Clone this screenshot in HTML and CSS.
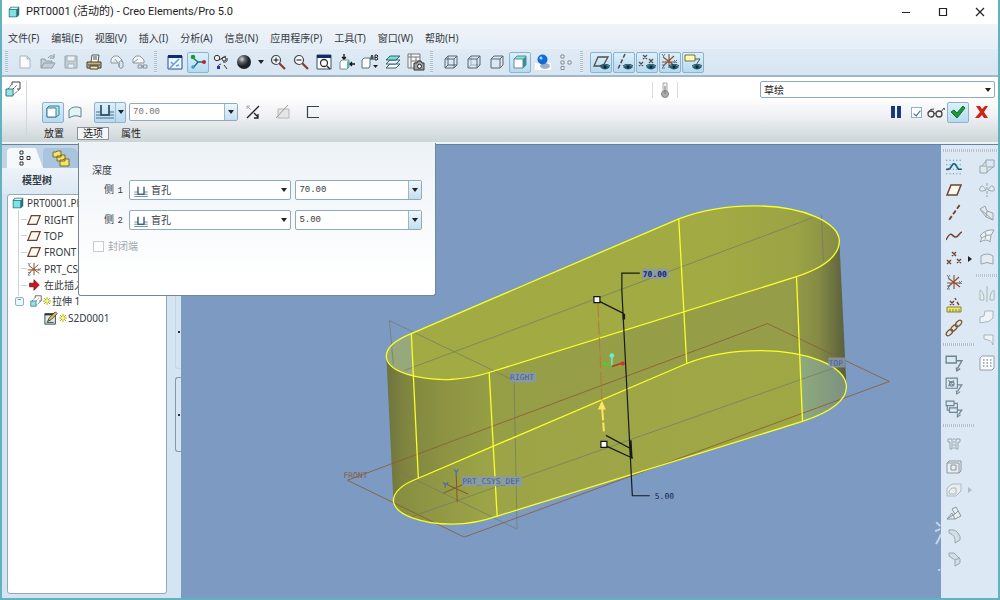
FILE: index.html
```html
<!DOCTYPE html>
<html lang="zh-CN">
<head>
<meta charset="utf-8">
<title>PRT0001 (活动的) - Creo Elements/Pro 5.0</title>
<link rel="stylesheet" href="styles.css">
</head>
<body>
<svg class="defs" aria-hidden="true">
  <symbol id="i-part" viewBox="0 0 16 16"><path d="M1 4 4 1H15V12L12 15H1Z" fill="#2d6f78"/><path d="M2 5H11V14H2Z" fill="#7fe3e3"/><path d="M2.500 4 4.500 2H14L12 4Z" fill="#d6f8f6"/></symbol>
  <symbol id="i-extrude" viewBox="0 0 16 16"><path d="M3 8 7 3M8 8 12 4M8 14 15 8" fill="none" stroke="#555" stroke-dasharray="2 1"/><path d="M7 4V1H15V8H12" fill="none" stroke="#444"/><path d="M1 8H8V15H1Z" fill="#8fe6e4" stroke="#357a86"/></symbol>
  <symbol id="i-plane" viewBox="0 0 16 16"><path d="M5 3H15L11 13H1Z" fill="#fff8ee" stroke="#6b4434" stroke-width="1.500"/></symbol>
  <symbol id="i-axis" viewBox="0 0 16 16"><path d="M13 1 3 15" stroke="#734130" stroke-width="1.600" stroke-dasharray="4 2"/></symbol>
  <symbol id="i-points" viewBox="0 0 16 16"><path d="M6 1l4 4m0-4L6 5M1 9l4 4m0-4-4 4M11 8l4 4m0-4-4 4" stroke="#6b4434" stroke-width="1.400"/></symbol>
  <symbol id="i-csys" viewBox="0 0 16 16"><path d="M8 1 8 15M2 4 14 13M2 13 13 3M1 9H15" stroke="#8a4b2c" stroke-width="1.100"/><path d="M1 1l1.500 2L4 1M2.500 3v2M1 12h3l-3 3h3M13 7l3 3m0-3-3 3" fill="none" stroke="#667c96"/></symbol>
  <symbol id="i-eye" viewBox="0 0 10 6"><path d="M0 3Q5-2 10 3Q5 8 0 3Z" fill="#256174"/><circle cx="5" cy="3" r="1.500" fill="#0b2533"/><path d="M0 2Q5-2 10 2" fill="none" stroke="#203e50"/></symbol>
  <symbol id="i-caret" viewBox="0 0 6 4"><path d="M0 0H6L3 4Z" fill="#222"/></symbol>
  <symbol id="i-depth" viewBox="0 0 18 16"><path d="M0 11H18M0 14H18M0 8H5M13 8H18" stroke="#4c7080"/><path d="M5 1V11H13V1" fill="none" stroke="#22455c" stroke-width="1.600"/></symbol>
  <symbol id="i-star" viewBox="0 0 8 8"><path d="M1 1 7 7M7 1 1 7M4 0V8M0 4H8" stroke="#abb116"/><circle cx="4" cy="4" r="1.500" fill="#fbff62"/></symbol>
  <symbol id="i-tag" viewBox="0 0 16 16"><path d="M1 2H10V8H1ZM10 6H15L11 13M10 12l.5 3 3-2" fill="none" stroke="#6f8492" stroke-width="1.200"/></symbol>
  <symbol id="i-mag" viewBox="0 0 16 16"><path d="M9 9 15 15" stroke="#8a3b2c" stroke-width="2.200"/><circle cx="6" cy="6" r="4.500" fill="#f6fbff" stroke="#444" stroke-width="1.200"/></symbol>
</svg>

<div class="window">
  <header class="title">
    <svg class="s12"><use href="#i-part"/></svg>
    <h1>PRT0001 (活动的) - Creo Elements/Pro 5.0</h1>
    <button aria-label="最小化"><svg viewBox="0 0 10 10"><path d="M1 5.500H9" stroke="#222"/></svg></button>
    <button aria-label="最大化"><svg viewBox="0 0 10 10"><path d="M1.500 1.500H8.500V8.500H1.500Z" fill="none" stroke="#222" stroke-width="1.200"/></svg></button>
    <button aria-label="关闭"><svg viewBox="0 0 10 10"><path d="M1 1 9 9M9 1 1 9" stroke="#222" stroke-width="1.200"/></svg></button>
  </header>

  <nav class="menu">
    <a href="#">文件(F)</a><a href="#">编辑(E)</a><a href="#">视图(V)</a><a href="#">插入(I)</a><a href="#">分析(A)</a><a href="#">信息(N)</a><a href="#">应用程序(P)</a><a href="#">工具(T)</a><a href="#">窗口(W)</a><a href="#">帮助(H)</a>
  </nav>

  <div class="toolbar">
    <i class="grip"></i>
    <button aria-label="新建"><svg class="s16" viewBox="0 0 16 16"><path d="M3 2H10L13 5V14H3ZM10 2V5H13" fill="#f8fafb" stroke="#a9b4bd"/></svg></button>
    <button aria-label="打开"><svg class="s16" viewBox="0 0 16 16"><path d="M1 14V5H5L6 7H12V9M1 14 4 9H15L12 14Z" fill="#c5ced4" stroke="#929da5"/><path d="M8 4Q11 0 14 3M14 0V4H10" fill="none" stroke="#87939c"/></svg></button>
    <button aria-label="保存"><svg class="s16" viewBox="0 0 16 16"><path d="M2 2H14V14H2Z" fill="#c5ced5" stroke="#9aa6af"/><path d="M4 2H12V7H4ZM5 10H11V14H5Z" fill="#eef2f5" stroke="#a8b3bb"/></svg></button>
    <button aria-label="打印"><svg class="s16" viewBox="0 0 16 16"><path d="M5 8 6 1H13L12 8" fill="#fff" stroke="#555"/><path d="M1 8H15V14H1Z" fill="#c8b47a" stroke="#443c2e"/><path d="M7 3H11M7 5H11M2 11H14" stroke="#444"/><path d="M4 12H12V15H4Z" fill="#f3e9a1" stroke="#443c2e"/></svg></button>
    <button aria-label="发送"><svg class="s16" viewBox="0 0 16 16"><path d="M2 9V5L5 2H9L13 6V8M2 9H9L6 5" fill="#f3f6f8" stroke="#8c979f"/><path d="M10 13V8Q12 5 14 8V13Q12 16 10 13V9" fill="none" stroke="#88939b"/></svg></button>
    <button aria-label="链接"><svg class="s16" viewBox="0 0 16 16"><path d="M1 9V5L4 2H8L12 6V9H1L6 5" fill="#f3f6f8" stroke="#8c979f"/><path d="M6 11H10V14H6ZM11 11H15V14H11ZM9 12.500H12" fill="none" stroke="#88939b"/></svg></button>
    <i class="grip sep"></i>
    <button aria-label="重画"><svg class="s16" viewBox="0 0 16 16"><path d="M1 2H15V15H1Z" fill="#e8f6ff" stroke="#274f9c"/><path d="M1 1H15V4H1Z" fill="#102c74"/><path d="M3 14 12 5M4 8l2 2M9 12l3-1" stroke="#6b9cc4" stroke-width="1.500"/></svg></button>
    <button class="on" aria-label="旋转中心"><svg class="s16" viewBox="0 0 16 16"><path d="M2 3 8 8H14M8 8 3 14" fill="none" stroke="#256a80" stroke-width="1.300"/><circle cx="3" cy="3" r="2.300" fill="#1e9a3c"/><circle cx="14" cy="8" r="2" fill="#c0212c"/><circle cx="3" cy="13" r="1.700" fill="#39a1bd"/></svg></button>
    <button aria-label="定向模式"><svg class="s16" viewBox="0 0 16 16"><circle cx="4" cy="4" r="2.700" fill="#eee" stroke="#333"/><circle cx="11" cy="5" r="2" fill="#eee" stroke="#333"/><path d="M6 6 13 2M10 8Q15 9 14 4M8 10Q4 11 5 15M11 11l3 4" fill="none" stroke="#333"/><path d="M4 12h3v3H4Z" fill="#203a90"/></svg></button>
    <button aria-label="外观库"><svg class="s16" viewBox="0 0 16 16"><defs><radialGradient id="ball" cx=".35" cy=".3"><stop stop-color="#d5dbe0"/><stop offset=".5" stop-color="#5a6068"/><stop offset="1" stop-color="#1e2228"/></radialGradient></defs><circle cx="8" cy="8" r="7" fill="url(#ball)"/></svg></button>
    <button class="drop" aria-label="外观菜单"><svg class="caret"><use href="#i-caret"/></svg></button>
    <button aria-label="放大"><svg class="s16" viewBox="0 0 16 16"><use href="#i-mag"/><path d="M3.500 6H8.500M6 3.500V8.500" stroke="#111"/></svg></button>
    <button aria-label="缩小"><svg class="s16" viewBox="0 0 16 16"><use href="#i-mag"/><path d="M3.500 6H8.500" stroke="#111"/></svg></button>
    <button aria-label="重新调整"><svg class="s16" viewBox="0 0 16 16"><path d="M1 1H15V15H1Z" fill="#fff" stroke="#32506e"/><path d="M1 1H15V4H1Z" fill="#142a6e"/><circle cx="8" cy="9" r="3.500" fill="none" stroke="#333" stroke-width="1.300"/><path d="M11 12 14 15" stroke="#333" stroke-width="1.500"/></svg></button>
    <button aria-label="重定向"><svg class="s16" viewBox="0 0 16 16"><path d="M1 8 3 6H10V13L8 15H1Z" fill="#fff" stroke="#6d949b"/><path d="M8 8 10 6V13L8 15Z" fill="#4fbcae"/><path d="M5 0V5M3 3 5 5 7 3M16 10H11M13 8l-2 2 2 2" fill="none" stroke="#111" stroke-width="1.300"/></svg></button>
    <button aria-label="已保存视图"><svg class="s18" viewBox="0 0 18 16"><path d="M1 6 3 4H9V12L8 14H1Z" fill="#fff" stroke="#527780"/><path d="M10 6V3L11 1 12 3V6M10 4H12M14 1V6H16L17 5 16 3.500H14M14 1H16L17 2 16 3.500" fill="none" stroke="#222"/><path d="M12 11H17L14.500 14Z" fill="#222"/></svg></button>
    <button aria-label="层"><svg class="s16" viewBox="0 0 16 16"><path d="M1 14 5 10H15L11 14Z" fill="#fff" stroke="#356470"/><path d="M1 10 5 6H15L11 10Z" fill="#eef" stroke="#356470"/><path d="M1 6 5 2H15L11 6Z" fill="#74dfd3" stroke="#356470"/></svg></button>
    <button aria-label="视图管理器"><svg class="s18" viewBox="0 0 18 18"><path d="M1 1H13V15H1ZM1 4H13M4 1V15M4 8H13M9 4V12" fill="#f7f7f7" stroke="#777"/><path d="M7 10H10L11 8H14L15 10H17V17H7Z" fill="#9ba4aa" stroke="#333"/><circle cx="12.500" cy="13.300" r="2" fill="#fff" stroke="#222"/></svg></button>
    <i class="grip sep"></i>
    <button aria-label="线框"><svg class="s16" viewBox="0 0 16 16"><path d="M2 5H11V14H2ZM5 2H14V11H5ZM2 5 5 2M11 5 14 2M11 14 14 11M2 14 5 11" fill="none" stroke="#59656e"/></svg></button>
    <button aria-label="隐藏线"><svg class="s16" viewBox="0 0 16 16"><path d="M5 2V11H14M2 14 5 11" fill="none" stroke="#a6b1b8"/><path d="M2 5H11V14H2ZM2 5 5 2H14V11L11 14M11 5 14 2" fill="none" stroke="#59656e"/></svg></button>
    <button aria-label="消隐"><svg class="s16" viewBox="0 0 16 16"><path d="M2 5H11V14H2ZM2 5 5 2H14V11L11 14M11 5 14 2" fill="none" stroke="#59656e"/></svg></button>
    <button class="on" aria-label="着色"><svg class="s16" viewBox="0 0 16 16"><path d="M2 5H11V14H2Z" fill="#fff"/><path d="M2 5 5 2H14L11 5Z" fill="#7fe8de"/><path d="M11 5 14 2V11L11 14Z" fill="#2b8d95"/><path d="M2 5H11V14H2ZM2 5 5 2H14V11L11 14" fill="none" stroke="#5e8c94"/></svg></button>
    <button aria-label="增强真实感"><svg class="s16" viewBox="0 0 16 16"><path d="M0 9H16V16H0Z" fill="#fff"/><ellipse cx="10" cy="12" rx="5" ry="3" fill="#9ab0c6"/><circle cx="7.500" cy="5.500" r="5" fill="#126bd8"/><circle cx="6" cy="4" r="1.500" fill="#a9d8ff"/></svg></button>
    <button aria-label="模型树"><svg class="s16" viewBox="0 0 16 16"><path d="M3 1H6V4H3ZM3 7H6V10H3ZM3 12.500H6V15.500H3ZM10 7H13V10H10Z" fill="#fff" stroke="#7e8990"/></svg></button>
    <i class="grip sep"></i>
    <button class="on" aria-label="平面显示"><svg class="s18" viewBox="0 0 18 18"><path d="M6 4H16L11 13H2Z" fill="none" stroke="#5d4a42" stroke-width="1.300"/><use href="#i-eye" x="8" y="11" width="10" height="6"/></svg></button>
    <button class="on" aria-label="轴显示"><svg class="s18" viewBox="0 0 18 18"><path d="M10 1 3 16" stroke="#5d4a42" stroke-width="1.500" stroke-dasharray="4 2"/><use href="#i-eye" x="8" y="11" width="10" height="6"/></svg></button>
    <button class="on" aria-label="点显示"><svg class="s18" viewBox="0 0 18 18"><path d="M5 2l4 4m0-4L5 6M1 9l4 4m0-4-4 4M11 6l4 4m0-4-4 4" stroke="#5d4a42" stroke-width="1.300"/><use href="#i-eye" x="8" y="11" width="10" height="6"/></svg></button>
    <button class="on" aria-label="坐标系显示"><svg class="s18" viewBox="0 0 18 18"><use href="#i-csys" x="0" y="0" width="16" height="16"/><use href="#i-eye" x="8" y="11" width="10" height="6"/></svg></button>
    <button class="on" aria-label="注释显示"><svg class="s18" viewBox="0 0 18 18"><path d="M1 2H11V8H1Z" fill="#fffbb0" stroke="#766e3e"/><path d="M11 6H16L12 12" fill="none" stroke="#555"/><use href="#i-eye" x="8" y="11" width="10" height="6"/></svg></button>
  </div>

  <section class="dash">
    <div class="feature"><svg class="s16"><use href="#i-extrude"/></svg></div>
    <div class="dashbody">
      <div class="row status">
        <span class="thermo"><svg class="s16" viewBox="0 0 16 16"><path d="M6 9V1H10V9" fill="#eee" stroke="#aaa"/><circle cx="8" cy="12" r="3.500" fill="#aaa" stroke="#888"/><path d="M8 4V12" stroke="#777"/></svg></span>
        <span class="combo filter"><select aria-label="过滤器"><option>草绘</option></select><svg class="caret"><use href="#i-caret"/></svg></span>
      </div>
      <div class="row tools">
        <button class="tool on" aria-label="实体"><svg class="s16" viewBox="0 0 16 16"><path d="M2 4 4 2H14V11L11 13H2Z" fill="#a8ecea" stroke="#437b94"/><path d="M2 4H11V13H2Z" fill="#fff" stroke="#437b94"/></svg></button>
        <button class="tool" aria-label="曲面"><svg class="s16" viewBox="0 0 16 16"><path d="M2 6Q7 1 14 4V13Q8 10 2 14Z" fill="#e3f4f4" stroke="#56848e"/></svg></button>
        <span class="split on"><button aria-label="深度选项"><svg class="depth"><use href="#i-depth"/></svg></button><button aria-label="深度菜单"><svg class="caret"><use href="#i-caret"/></svg></button></span>
        <span class="combo depthval"><input class="num" aria-label="深度值" value="70.00"><button aria-label="最近值"><svg class="caret"><use href="#i-caret"/></svg></button></span>
        <button class="tool wide" aria-label="反向"><svg class="s16" viewBox="0 0 16 16"><path d="M2 14 14 2M9 9l4 4M13 10v4H9" fill="none" stroke="#222" stroke-width="1.300"/><path d="M2 2l4 4M2 5V2H5" fill="none" stroke="#aaa"/></svg></button>
        <button class="tool wide" aria-label="移除材料"><svg class="s16" viewBox="0 0 16 16"><path d="M3 5H14V14H3Z" fill="#e6e6e6" stroke="#b6b6b6"/><path d="M1 14 13 1" stroke="#999"/></svg></button>
        <button class="tool wide" aria-label="加厚"><svg class="s16" viewBox="0 0 16 16"><path d="M14 2.500H2.500V13.500H14" fill="none" stroke="#2c4550" stroke-width="1.200"/></svg></button>
        <span class="confirm">
          <button class="tool" aria-label="暂停"><svg class="s16" viewBox="0 0 16 16"><path d="M3 2H7V14H3ZM9 2H13V14H9Z" fill="#1a3684"/></svg></button>
          <input class="tick" type="checkbox" checked aria-label="预览">
          <svg class="s18" viewBox="0 0 18 16"><circle cx="4" cy="10" r="3" fill="none" stroke="#444" stroke-width="1.300"/><circle cx="12" cy="10" r="3" fill="none" stroke="#444" stroke-width="1.300"/><path d="M1 9Q3 4 7 5M7 10Q8 8 9 10M14 8 17 4 18 6" fill="none" stroke="#444"/></svg>
          <button class="tool on" aria-label="确定"><svg class="s16" viewBox="0 0 16 16"><path d="M1 8 4 6 7 9 13 2 15 4 7 14Z" fill="#1b9c35" stroke="#0f7224"/></svg></button>
          <button class="tool" aria-label="取消"><svg class="s16" viewBox="0 0 16 16"><path d="M2 2H6L8 5 11 2H14L10 8 14 14H10L8 11 5 14H1L6 8Z" fill="#cc2419"/></svg></button>
        </span>
      </div>
      <div class="row slides">
        <button>放置</button><button class="open">选项</button><button>属性</button>
      </div>
    </div>

    <form class="popup">
      <h2>深度</h2>
      <div class="side"><label for="s1">侧 <span class="num">1</span></label>
        <span class="combo mode"><svg class="depth small"><use href="#i-depth"/></svg><select id="s1"><option>盲孔</option></select><svg class="caret"><use href="#i-caret"/></svg></span>
        <span class="combo value"><input class="num" aria-label="侧 1 深度" value="70.00"><button type="button" aria-label="侧 1 最近值"><svg class="caret"><use href="#i-caret"/></svg></button></span></div>
      <div class="side"><label for="s2">侧 <span class="num">2</span></label>
        <span class="combo mode"><svg class="depth small"><use href="#i-depth"/></svg><select id="s2"><option>盲孔</option></select><svg class="caret"><use href="#i-caret"/></svg></span>
        <span class="combo value"><input class="num" aria-label="侧 2 深度" value="5.00"><button type="button" aria-label="侧 2 最近值"><svg class="caret"><use href="#i-caret"/></svg></button></span></div>
      <label class="cap"><input type="checkbox" class="tick" disabled>封闭端</label>
    </form>
  </section>

  <main>
    <aside class="nav">
      <div class="tabs">
        <button class="active" aria-label="模型树"><svg class="s16" viewBox="0 0 16 16"><path d="M3 1H6V4H3ZM3 6.500H6V9.500H3ZM3 12H6V15H3ZM10 6.500H13V9.500H10Z" fill="#fff" stroke="#333"/></svg></button>
        <button aria-label="文件夹"><svg class="s18" viewBox="0 0 18 18"><path d="M1 3H4L5 2H9V8H1ZM5 7H8L9 6H13V12H5ZM8 11H11L12 10H17V17H8Z" fill="#f4e36a" stroke="#7b6a22"/></svg></button>
      </div>
      <h2>模型树</h2>
      <div class="treebox">
        <ul class="tree">
          <li><svg class="s12"><use href="#i-part"/></svg>PRT0001.PRT</li>
          <li class="l1"><svg class="s14"><use href="#i-plane"/></svg>RIGHT</li>
          <li class="l1"><svg class="s14"><use href="#i-plane"/></svg>TOP</li>
          <li class="l1"><svg class="s14"><use href="#i-plane"/></svg>FRONT</li>
          <li class="l1"><svg class="s14"><use href="#i-csys"/></svg>PRT_CSYS_DEF</li>
          <li class="l1"><svg class="s14" viewBox="0 0 16 16"><path d="M3 6H8V2L14 8 8 14V10H3Z" fill="#c81822" stroke="#7c1015"/></svg>在此插入</li>
          <li class="l1 branch"><svg class="s12"><use href="#i-extrude"/></svg><svg class="s8"><use href="#i-star"/></svg>拉伸 1</li>
          <li class="l2"><svg class="s14" viewBox="0 0 16 16"><path d="M1 3H13V15H1Z" fill="#d9edf3" stroke="#333"/><path d="M1 3H13V5H1Z" fill="#333"/><path d="M4 12 6 8 13 1 15 3 8 10Z" fill="#ecc44d" stroke="#333"/><path d="M3 13H11" stroke="#333"/></svg><svg class="s8"><use href="#i-star"/></svg>S2D0001</li>
        </ul>
      </div>
      <div class="sash"><span></span><span class="handle"></span></div>
    </aside>

    <div class="view">
      <svg viewBox="181 144 760 454" role="img" aria-label="拉伸预览">
        <defs>
          <linearGradient id="wall" gradientUnits="userSpaceOnUse" x1="386" y1="0" x2="847" y2="0">
            <stop stop-color="#6d733f"/><stop offset=".04" stop-color="#7f853f"/><stop offset=".12" stop-color="#8c9242"/><stop offset=".23" stop-color="#969e46"/><stop offset=".88" stop-color="#969d48"/><stop offset=".94" stop-color="#858a45"/><stop offset="1" stop-color="#585e3c"/>
          </linearGradient>
          <linearGradient id="base" gradientUnits="userSpaceOnUse" x1="393" y1="0" x2="847" y2="0">
            <stop stop-color="#868c42"/><stop offset=".2" stop-color="#9ca447"/><stop offset="1" stop-color="#a0a845"/>
          </linearGradient>
          <linearGradient id="lid" gradientUnits="userSpaceOnUse" x1="720" y1="0" x2="840" y2="0">
            <stop stop-color="#a1aa43"/><stop offset=".65" stop-color="#9ba345"/><stop offset="1" stop-color="#858b47"/>
          </linearGradient>
          <linearGradient id="pale" x1="0" x2="1"><stop stop-color="#8faa7c"/><stop offset="1" stop-color="#7c9182"/></linearGradient>
        </defs>
        <path fill="url(#wall)" d="M386 357 411 333 679 218 797 240H840L847 385C848 400 830 412 803 421L497 516C483 521 468 524 452 524 422 524 395 515 393 501Z"/>
        <path fill="url(#base)" d="M418 478C402 484 393 492 393 501 395 515 422 524 452 524 468 524 483 521 497 516L803 421V355C790 351 775 350 760 350 733 350 709 354 687 363Z"/>
        <path fill="url(#pale)" d="M801 354C830 361 847 373 847 385 848 400 830 412 803 421Z"/>
        <path fill="url(#lid)" d="M411 333C396 339 385 347 386 357 388 372 420 380 450 379 465 378 477 376 489 372L797 276C824 267 840 256 840 240 839 222 805 205 755 205 728 205 703 209 679 218Z"/>
        <path fill="#98a87d" d="M411 333C396 339 385 347 386 357 387 366 398 373 413 376Z"/>
        <g fill="none" stroke="#747b66" stroke-width="1" opacity=".75">
          <path d="M389 320 514 380 517 529 402 473M389 320 393 364M404 370 813 217M822 214 824 260M410 517 847 363"/>
        </g>
        <path d="M347 480 464 537 890 381 768 323Z" fill="none" stroke="#8e5b34" opacity=".85"/>
        <g fill="none" stroke="#faff28" stroke-width="1.300">
          <path d="M411 333C396 339 385 347 386 357 388 372 420 380 450 379 465 378 477 376 489 372L797 276C824 267 840 256 840 240 839 222 805 205 755 205 728 205 703 209 679 218Z"/>
          <path d="M418 478C402 484 393 492 393 501 395 515 422 524 452 524 468 524 483 521 497 516L803 421C830 412 848 400 847 385 845 365 808 350 760 350 733 350 709 354 687 363Z"/>
          <path d="M411 333 418 478M489 372 497 516M679 218 687 363M797 276 803 421"/>
        </g>
        <path d="M598 303 602 400" fill="none" stroke="#b8763b" stroke-dasharray="14 3"/>
        <path d="M602 404 604 431" stroke="#ffe65a" stroke-width="2" stroke-dasharray="16 2 10"/><path d="M598 409 602 400 606 409Z" fill="#ffe65a"/>
        <g fill="none" stroke="#17191d" stroke-width="1.200"><path d="M640 272.500H622V290L632.500 495.500H650M600 301 624 313M606 435 632 449M607 446 633 458"/><path d="M624 313V319M630.500 440 631.500 458" stroke-width="2.500"/></g>
        <path d="M594 296H600V302H594ZM601 441H607V447H601Z" fill="#fff" stroke="#111" stroke-width="1.200"/>
        <path d="M612 365V355" stroke="#5ff2d5" stroke-width="1.500"/><circle cx="612" cy="355" r="2.300" fill="#5ff2d5"/><path d="M612 366 604 363" stroke="#46d238" stroke-width="1.500"/><circle cx="605" cy="363" r="1.800" fill="#46d238"/><path d="M612 366 624 362" stroke="#b03c24" stroke-width="1.500"/><circle cx="623" cy="363" r="2" fill="#d22f2a"/>
        <path d="M456 475 457 502M443 493 468 482M444 483 468 494" stroke="#845526"/><path d="M454 469l2 3 2-3M456 472v4M443 482l2 3 3-3M445 485v3" fill="none" stroke="#4f70b0" stroke-width="1.300"/>
        <g fill="#8799b4"><path d="M642 268H669V278H642ZM510 372H536V382H510ZM462 476H522V486H462Z" opacity=".8"/><path d="M829 357H846V367H829Z" opacity=".8"/></g>
        <g class="dim"><text class="strong" x="643" y="276">70.00</text><text x="655" y="499">5.00</text></g>
        <g class="tag"><text x="510" y="380">RIGHT</text><text x="462" y="484">PRT_CSYS_DEF</text><text x="829" y="365">TOP</text><text class="front" x="343" y="478">FRONT</text></g>
        <path d="M937 522 941 526M936 531l5-2M937 544l5-10M939 570h2" stroke="#dce6f0" stroke-width="2" opacity=".8"/>
      </svg>
    </div>

    <aside class="rail">
      <div class="col">
        <i class="dots"></i>
        <button aria-label="草绘"><svg class="s18" viewBox="0 0 16 16"><path d="M1 2H15M1 14H15M1 6H15M1 10H15" stroke="#4d91aa" stroke-dasharray="1 2"/><path d="M1 10Q4 11 6 7T10 7L12 10H15" fill="none" stroke="#176584" stroke-width="1.500"/></svg></button>
        <button aria-label="平面"><svg class="s16"><use href="#i-plane"/></svg></button>
        <button aria-label="轴"><svg class="s18"><use href="#i-axis"/></svg></button>
        <button aria-label="曲线"><svg class="s16" viewBox="0 0 16 16"><path d="M0 12C5 2 6 8 9 9S13 5 16 4" fill="none" stroke="#734130" stroke-width="1.500"/></svg></button>
        <button class="more" aria-label="点"><svg class="s16"><use href="#i-points"/></svg><svg class="arrow" viewBox="0 0 4 6"><path d="M0 0 4 3 0 6Z" fill="#222"/></svg></button>
        <button aria-label="坐标系"><svg class="s16"><use href="#i-csys"/></svg></button>
        <button aria-label="分析"><svg class="s16" viewBox="0 0 16 16"><path d="M4 4l4 4m0-4L4 8M9 1l1 2M11 5l2 3" stroke="#734130" stroke-width="1.400"/><path d="M1 10H15V15H1Z" fill="#f1e76e" stroke="#8b8231"/><path d="M4 12V15M7 12V15M10 12V15M13 12V15" stroke="#8b8231"/></svg></button>
        <button aria-label="参照"><svg class="s18" viewBox="0 0 16 16"><g fill="none" stroke="#7b5830" stroke-width="1.200"><ellipse cx="4" cy="12" rx="3.500" ry="2" transform="rotate(-45 4 12)"/><ellipse cx="8" cy="8" rx="3.500" ry="2" transform="rotate(-45 8 8)"/><ellipse cx="12" cy="4" rx="3.500" ry="2" transform="rotate(-45 12 4)"/></g></svg></button>
        <i class="dots mid"></i>
        <button aria-label="注释"><svg class="s18"><use href="#i-tag"/></svg></button>
        <button aria-label="注释图"><svg class="s18" viewBox="0 0 16 16"><path d="M1 1H11V10H1ZM3 3l5 5M8 3 3 8M11 7H15L11 13M10 12l.5 3 3-2" fill="none" stroke="#6f8492"/><circle cx="6" cy="6" r="2" fill="none" stroke="#6f8492"/></svg></button>
        <button aria-label="注释组"><svg class="s18" viewBox="0 0 16 16"><path d="M1 1H8V5H1ZM4 7H11V11H4ZM8 3H11V7M2 5V9H4M11 9H15L12 13M11 12v3l3-2" fill="none" stroke="#6f8492"/></svg></button>
        <i class="dots mid"></i>
        <button aria-label="孔"><svg class="s16" viewBox="0 0 16 16"><path d="M2 3H6V13H4V6H2ZM14 3H10V13H12V6H14Z" fill="#e5ebef" stroke="#98a4ac"/><path d="M8 2V14" stroke="#98a4ac" stroke-dasharray="2 1"/></svg></button>
        <button aria-label="壳"><svg class="s16" viewBox="0 0 16 16"><path d="M1 4 3 2H15V12L13 14H1ZM1 4H13V14M5 6H10V11H5Z" fill="#e7edf0" stroke="#8c979f"/></svg></button>
        <button class="more" aria-label="筋"><svg class="s16" viewBox="0 0 16 16"><path d="M1 6 6 2H15V9L10 14H1ZM3 12V9L6 6H10V12Z" fill="#e7edf0" stroke="#b0b9bf"/></svg><svg class="arrow" viewBox="0 0 4 6"><path d="M0 0 4 3 0 6Z" fill="#b0bac1"/></svg></button>
        <button aria-label="拔模"><svg class="s16" viewBox="0 0 16 16"><path d="M1 14H9L15 11 10 2 6 4 9 9Z" fill="#e7edf0" stroke="#8c979f"/><path d="M1 14 6 8 9 14M9 9 12 6" fill="none" stroke="#8c979f"/></svg></button>
        <button aria-label="倒圆角"><svg class="s16" viewBox="0 0 16 16"><path d="M3 2Q9 1 12 5T14 12L9 15Q10 7 3 5Z" fill="#d5dee4" stroke="#9aa6ae"/></svg></button>
        <button aria-label="倒角"><svg class="s16" viewBox="0 0 16 16"><path d="M3 2H8L14 8V12L9 15V9L3 5ZM9 9 14 7" fill="#d5dee4" stroke="#9aa6ae"/></svg></button>
      </div>
      <div class="col faded">
        <i class="dots"></i>
        <button aria-label="拉伸"><svg class="s16" viewBox="0 0 16 16"><path d="M7 6V1H15V8H9M3 7 7 2M8 13 14 8" fill="none" stroke="#929da5"/><path d="M1 7H8V14H1Z" fill="#e3eaee" stroke="#929da5"/></svg></button>
        <button aria-label="旋转"><svg class="s16" viewBox="0 0 16 16"><path d="M8 1V15" stroke="#929da5" stroke-dasharray="3 1"/><path d="M7 8Q3 1 1 6T7 8M9 8Q13 1 15 6T9 8" fill="#e8eef1" stroke="#929da5"/></svg></button>
        <button aria-label="扫描"><svg class="s16" viewBox="0 0 16 16"><path d="M1 4 6 1 8 6 14 8V15L7 12Z" fill="#e3eaee" stroke="#929da5"/><path d="M1 4 14 15M8 6 7 12" stroke="#929da5"/></svg></button>
        <button aria-label="边界混合"><svg class="s16" viewBox="0 0 16 16"><path d="M1 8Q6 1 15 2 11 7 11 14 8 10 1 14 4 9 1 8ZM6 4Q8 7 6 11M3 10Q7 6 12 7" fill="#eef2f4" stroke="#929da5"/></svg></button>
        <button aria-label="造型"><svg class="s16" viewBox="0 0 16 16"><path d="M2 5Q8 1 14 5V13Q8 10 2 13Z" fill="#e8eef1" stroke="#929da5"/></svg></button>
        <i class="dots mid"></i>
        <button aria-label="镜像"><svg class="s16" viewBox="0 0 16 16"><path d="M8 0V16M1 14V4Q5 6 5 14ZM15 14V4Q11 6 11 14Z" fill="#e8eef1" stroke="#a5b0b7"/></svg></button>
        <button aria-label="合并"><svg class="s16" viewBox="0 0 16 16"><path d="M6 2H14V9Q9 14 6 13L1 14V8L5 7Z" fill="#f3f6f7" stroke="#a5b0b7"/></svg></button>
        <button aria-label="修剪"><svg class="s16" viewBox="0 0 16 16"><path d="M5 3H14V13Q13 8 5 7Z" fill="#f3f6f7" stroke="#a5b0b7"/></svg></button>
        <button aria-label="阵列"><svg class="s16" viewBox="0 0 16 16"><path d="M1 3 3 1H15V13L13 15H1Z" fill="#fff" stroke="#8a97a0"/><path d="M4 5H13M4 8H13M4 11H13" stroke="#8995a0" stroke-width="1.500" stroke-dasharray="1.500 2"/></svg></button>
      </div>
    </aside>
  </main>
</div>
</body>
</html>
```
FILE: styles.css
```css
* { box-sizing: border-box; }
body { margin: 0; font: 10px/16px "Noto Sans", "Noto Sans CJK SC", sans-serif; color: #333a42; }
button, input, select { font: inherit; color: inherit; }
button { padding: 0; border: 0; background: none; display: flex; align-items: center; justify-content: center; }
h1, h2 { margin: 0; }
svg { display: block; flex: none; }
.defs { position: absolute; width: 0; height: 0; }
.s8 { width: 8px; height: 8px; }
.s12 { width: 12px; height: 12px; }
.s14 { width: 14px; height: 14px; }
.s16 { width: 16px; height: 16px; }
.s18 { width: 18px; height: 18px; }
.caret { width: 6px; height: 4px; }
.depth { width: 18px; height: 16px; }
.depth.small { width: 14px; height: 12px; margin-top: 3px; }
.num { font-family: "Liberation Mono", monospace; font-size: 9px; }

.window { height: 100vh; display: flex; flex-direction: column; border: solid #62b3bf; border-width: 0 2px 2px; background: #dbe8f3; }

.title { display: flex; align-items: center; height: 24px; background: #fff; padding-left: 6px; flex: none; }
.title h1 { flex: 1; font: 400 11px/16px Roboto, "Noto Sans CJK SC", sans-serif; color: #222; margin-left: 6px; }
.title button { width: 37px; height: 24px; }
.title button svg { width: 10px; height: 10px; }

.menu { display: flex; align-items: center; gap: 12px; height: 24px; padding: 4px 6px 0; flex: none; background: linear-gradient(#f1f4fa, #e5edf6); }
.menu a { color: inherit; text-decoration: none; white-space: nowrap; }

.toolbar { display: flex; align-items: center; gap: 1px; height: 29px; padding: 0 3px; flex: none; background: linear-gradient(#dfeaf4, #d7e6f2); border-bottom: 2px solid #a3b8c6; border-top: 1px solid #e8eff6; }
.toolbar button { width: 22px; height: 21px; }
.toolbar .drop { width: 10px; }
.grip { width: 3px; height: 22px; margin-right: 5px; flex: none; background: repeating-linear-gradient(#aebecb 0 1px, #e6eff6 1px 2px); }
.grip.sep { margin: 0 6px 0 2px; }
.on { border: 1px solid #8db3cb; border-radius: 2px; background: linear-gradient(#dcf0fb, #b5daf2); }

.dash { position: relative; display: flex; height: 67px; flex: none; border-bottom: 2px solid #eef3f6; background: linear-gradient(#fff 30%, #f0f1f4 60%, #ccd5d7); }
.feature { width: 25px; margin: 4px 0; padding-left: 3px; border-right: 1px solid #d2d7da; flex: none; }
.dashbody { flex: 1; padding: 3px 3px 0 15px; }
.row { display: flex; align-items: center; }
.status { height: 19px; justify-content: flex-end; gap: 82px; }
.thermo { padding: 0 4px; border: solid #d8dbdd; border-width: 0 1px; }
.combo { display: flex; align-items: center; border: 1px solid #8fa9bd; border-radius: 2px; background: #fff; }
.combo select, .combo input { flex: 1; min-width: 0; width: 100%; height: 100%; padding: 0 0 0 3px; border: 0; background: none; appearance: none; outline: 0; }
.combo > .caret { margin-right: 3px; }
.combo button { width: 13px; height: 100%; border-left: 1px solid #9db5c6; background: linear-gradient(#eef7fd, #c4def0); }
.filter { width: 235px; height: 17px; color: #222; }
.tools { height: 25px; padding-top: 1px; }
.tool { width: 22px; height: 21px; flex: none; }
.tool.wide { width: 30px; }
.split { display: flex; width: 32px; height: 21px; margin: 0 3px 0 8px; }
.split button { flex: 1; }
.split button:first-child { flex: none; width: 21px; border-right: 1px solid #9dbdd1; }
.depthval { width: 109px; height: 18px; color: #707478; }
.confirm { display: flex; align-items: center; gap: 2px; margin: 0 2px 0 auto; }
.confirm .tick { margin: 0 3px 0 2px; }
.tick { appearance: none; width: 11px; height: 11px; margin: 0; border: 1px solid #8fb2cc; background: #fff; display: grid; place-items: center; }
.tick:checked::before { content: ""; width: 3px; height: 6px; border: solid #345a80; border-width: 0 1px 1px 0; transform: rotate(40deg); }
.tick:disabled { border-color: #c5ccd2; }
.slides { gap: 13px; height: 18px; padding-left: 2px; color: #222; }
.slides button { height: 13px; }
.slides .open { border: 1px solid #8b9499; padding: 0 5px; margin-right: -1px; background: #f4f6f7; }

.popup { position: absolute; z-index: 2; left: 76px; top: 66px; width: 358px; height: 153px; padding: 19px 13px 0; border: 1px solid #758795; border-top: 0; border-radius: 0 0 3px 3px; background: linear-gradient(#edf2f7, #fff 90%); }
.popup h2 { font-size: 10px; font-weight: 400; }
.side { display: flex; align-items: center; gap: 4px; height: 20px; margin: 2px 0 10px; }
.side + .side { margin-top: 0; }
.side label { width: 33px; padding-left: 12px; white-space: nowrap; }
.side .num { margin-left: 1px; }
.mode { width: 163px; height: 20px; padding-left: 4px; }
.value { width: 127px; height: 20px; }
.value .num { margin: 0; }
.cap { display: flex; align-items: center; gap: 4px; color: #a0a7ad; padding: 0 1px; margin-top: -2px; }

main { display: flex; flex: 1; min-height: 0; border-top: 1px solid #64839c; }
.nav { display: grid; grid-template: 23px 26px 1fr / 165px 14px; width: 179px; flex: none; background: #d4e4f1; }
.tabs { display: flex; grid-column: 1 / -1; padding: 3px 5px 0; background: #c0d4e6; }
.tabs button { width: 36px; height: 20px; border-radius: 4px 8px 0 0; background: #a9c4df; }
.tabs .active { background: #f5f9fc; clip-path: polygon(0 0, 80% 0, 100% 100%, 0 100%); }
.nav h2 { grid-column: 1 / -1; padding: 4px 20px; font-size: 10px; background: linear-gradient(#edf3f9, #dce8f3); }
.treebox { margin: 0 0 4px 5px; border: 1px solid #93a9b8; border-radius: 3px; background: #fff; overflow: hidden; }
.tree { list-style: none; margin: 0; padding: 0 0 0 4px; height: 131px; display: grid; grid-auto-rows: 1fr; background: linear-gradient(#ccd3d8, #ccd3d8) 10px 15px / 1px 86px no-repeat; }
.tree li { display: flex; align-items: center; gap: 3px; white-space: nowrap; }
.tree .l1 { padding-left: 15px; }
.tree .l1::before { content: ""; width: 6px; height: 1px; margin: 0 -3px 0 -6px; background: #ccd3d8; }
.tree .l2 { padding-left: 32px; gap: 1px; }
.tree .branch { gap: 1px; padding-left: 6px; }
.tree .branch::before { content: "−"; width: 7px; height: 7px; margin: 0 5px 0 -3px; border: 1px solid #8eb4c8; border-radius: 2px; background: #eef8fc; font-size: 7px; line-height: 4px; text-align: center; }
.sash { display: flex; flex-direction: column; align-items: flex-end; }
.sash span { width: 6px; height: 75px; display: grid; place-items: center; border: 1px solid #c5d7e5; border-right: 0; border-radius: 3px 0 0 3px; margin-top: 100px; }
.sash .handle { border-color: #8598a8; margin-top: 8px; }
.sash span::before { content: ""; width: 2px; height: 2px; background: #333; }

.view { flex: 1; min-width: 0; background: #7d9bc2; }
.view svg { width: 100%; height: 100%; }
.dim, .tag { font: 8px "DejaVu Sans Mono", monospace; fill: #14204e; }
.dim .strong { font-weight: 700; fill: #10207a; }
.tag { fill: #4361a4; }
.tag .front { fill: #845c46; }

.rail { display: flex; gap: 2px; width: 57px; padding: 4px 0 0 2px; flex: none; background: #dce9f4; overflow: hidden; }
.col { display: flex; flex-direction: column; width: 31px; flex: none; }
.col button { height: 23px; width: 22px; flex: none; }
.col .more { width: 29px; justify-content: space-between; padding-left: 3px; }
.faded { width: 22px; opacity: .9; }
.arrow { width: 4px; height: 6px; }
.dots { height: 3px; margin-bottom: 3px; flex: none; background: repeating-linear-gradient(90deg, #aebecb 0 1px, #e6eff6 1px 2px); }
.dots.mid { margin: 4px 0 5px; }
```
